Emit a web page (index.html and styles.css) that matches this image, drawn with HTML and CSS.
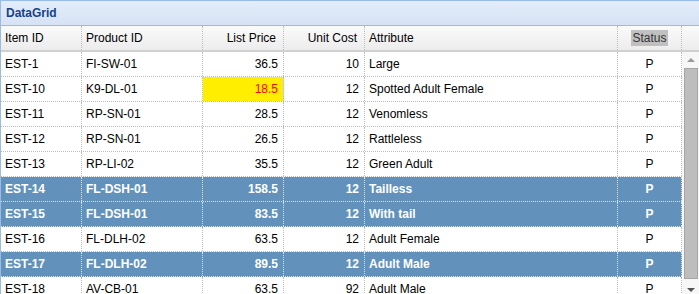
FILE: index.html
```html
<!DOCTYPE html>
<html>
<head>
<meta charset="utf-8">
<link rel="stylesheet" href="styles.css">
</head>
<body>
<div class="panel">
  <div class="title">DataGrid</div>
  <div class="head">
    <div class="hc">Item ID</div>
    <div class="hc">Product ID</div>
    <div class="hc num">List Price</div>
    <div class="hc num">Unit Cost</div>
    <div class="hc">Attribute</div>
    <div class="hc ctr"><span class="hl">Status</span></div>
    <div class="hc last"></div>
  </div>
  <div class="body">
    <div class="rows">
      <div class="row"><div class="c">EST-1</div><div class="c">FI-SW-01</div><div class="c r">36.5</div><div class="c r">10</div><div class="c">Large</div><div class="c m">P</div></div>
      <div class="row"><div class="c">EST-10</div><div class="c">K9-DL-01</div><div class="c r warn">18.5</div><div class="c r">12</div><div class="c">Spotted Adult Female</div><div class="c m">P</div></div>
      <div class="row"><div class="c">EST-11</div><div class="c">RP-SN-01</div><div class="c r">28.5</div><div class="c r">12</div><div class="c">Venomless</div><div class="c m">P</div></div>
      <div class="row"><div class="c">EST-12</div><div class="c">RP-SN-01</div><div class="c r">26.5</div><div class="c r">12</div><div class="c">Rattleless</div><div class="c m">P</div></div>
      <div class="row"><div class="c">EST-13</div><div class="c">RP-LI-02</div><div class="c r">35.5</div><div class="c r">12</div><div class="c">Green Adult</div><div class="c m">P</div></div>
      <div class="row sel"><div class="c">EST-14</div><div class="c">FL-DSH-01</div><div class="c r">158.5</div><div class="c r">12</div><div class="c">Tailless</div><div class="c m">P</div></div>
      <div class="row sel"><div class="c">EST-15</div><div class="c">FL-DSH-01</div><div class="c r">83.5</div><div class="c r">12</div><div class="c">With tail</div><div class="c m">P</div></div>
      <div class="row"><div class="c">EST-16</div><div class="c">FL-DLH-02</div><div class="c r">63.5</div><div class="c r">12</div><div class="c">Adult Female</div><div class="c m">P</div></div>
      <div class="row sel"><div class="c">EST-17</div><div class="c">FL-DLH-02</div><div class="c r">89.5</div><div class="c r">12</div><div class="c">Adult Male</div><div class="c m">P</div></div>
      <div class="row"><div class="c">EST-18</div><div class="c">AV-CB-01</div><div class="c r">63.5</div><div class="c r">92</div><div class="c">Adult Male</div><div class="c m">P</div></div>
    </div>
    <div class="scroll">
      <div class="btn"><span class="up"></span></div>
      <div class="thumb"></div>
      <div class="btn down-btn"><span class="down"></span></div>
    </div>
  </div>
</div>
</body>
</html>
```
FILE: styles.css
```css
html, body {
  margin: 0;
  padding: 0;
  background: #ffffff;
  overflow: hidden;
}
body {
  font-family: "Liberation Sans", Arial, sans-serif;
  font-size: 12px;
  color: #000;
}
.panel {
  width: 699px;
  height: 294px;
  box-sizing: border-box;
  border-left: 1px solid #99bbe8;
  overflow: hidden;
}
.title {
  height: 26px;
  box-sizing: border-box;
  border-top: 1px solid #99bbe8;
  border-bottom: 1px solid #99bbe8;
  background: linear-gradient(#e3ecf9, #d6e3f4);
  color: #15428b;
  font-weight: bold;
  line-height: 24px;
  padding-left: 5px;
}
.head {
  display: grid;
  grid-template-columns: 81px 121px 81px 81px 253px 64px 1fr;
  height: 26px;
  box-sizing: border-box;
  border-bottom: 2px solid #d0d0d0;
  background: linear-gradient(#fbfbfb, #ececec);
}
.hc {
  border-right: 1px dotted #bdbdbd;
  line-height: 24px;
  padding-left: 4px;
  white-space: nowrap;
  overflow: hidden;
}
.hc.num { text-align: right; padding-right: 7px; padding-left: 0; }
.hc.ctr { text-align: center; padding-left: 0; }
.hc.last { border-right: none; }
.hl {
  background: #c0c0c0;
  color: #333;
  padding: 1px 1px;
}
.body {
  display: flex;
}
.rows {
  width: 681px;
}
.row {
  display: grid;
  grid-template-columns: 81px 121px 81px 81px 253px 64px;
  height: 25px;
  box-sizing: border-box;
  border-bottom: 1px dotted #bdbdbd;
}
.c {
  border-right: 1px dotted #bdbdbd;
  line-height: 24px;
  padding-left: 4px;
  white-space: nowrap;
  overflow: hidden;
}
.c.r { text-align: right; padding-left: 0; padding-right: 5px; }
.c.m { text-align: center; padding-left: 0; }
.c.warn { background: #ffee00; color: #ff0000; }
.row.sel {
  background: #6292bc;
  color: #fff;
  font-weight: bold;
  border-bottom-color: #d6e2ee;
}
.row.sel .c { border-right-color: #d6e2ee; }
.scroll {
  flex: 1;
  background: #f7f7f7;
  display: flex;
  flex-direction: column;
}
.btn {
  height: 16px;
  display: flex;
  align-items: center;
  justify-content: center;
}
.down-btn { height: 21px; }
.up {
  width: 0;
  height: 0;
  border-left: 4px solid transparent;
  border-right: 4px solid transparent;
  border-bottom: 4px solid #9a9a9a;
  margin-left: 1px;
}
.down {
  width: 0;
  height: 0;
  border-left: 4px solid transparent;
  border-right: 4px solid transparent;
  border-top: 4px solid #555;
  margin-left: 1px;
}
.thumb {
  height: 211px;
  margin-left: 2px;
  width: 14px;
  box-sizing: border-box;
  border: 1px solid #a6a6a6;
  background: #bdbdbd;
}
```
